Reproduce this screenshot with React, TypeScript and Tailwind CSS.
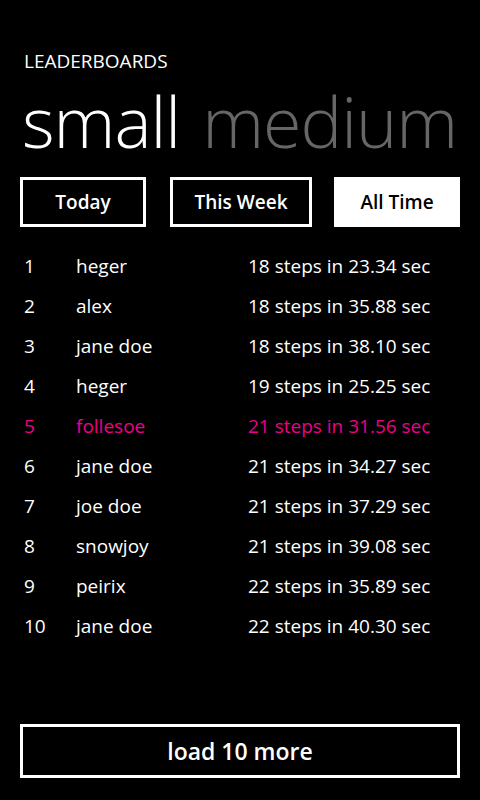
const rows = [
  { rank: 1, name: "heger", score: "18 steps in 23.34 sec" },
  { rank: 2, name: "alex", score: "18 steps in 35.88 sec" },
  { rank: 3, name: "jane doe", score: "18 steps in 38.10 sec" },
  { rank: 4, name: "heger", score: "19 steps in 25.25 sec" },
  { rank: 5, name: "follesoe", score: "21 steps in 31.56 sec", me: true },
  { rank: 6, name: "jane doe", score: "21 steps in 34.27 sec" },
  { rank: 7, name: "joe doe", score: "21 steps in 37.29 sec" },
  { rank: 8, name: "snowjoy", score: "21 steps in 39.08 sec" },
  { rank: 9, name: "peirix", score: "22 steps in 35.89 sec" },
  { rank: 10, name: "jane doe", score: "22 steps in 40.30 sec" },
];

export default function App() {
  return (
    <div className="flex min-h-[800px] w-[480px] flex-col bg-black font-['Open_Sans','Noto_Sans',sans-serif] text-white">
      <div className="px-6 pt-[48px] text-[19px] leading-[26px]">LEADERBOARDS</div>

      <div className="flex gap-[22px] whitespace-nowrap pl-[22px] text-[70px] font-light leading-[95px] tracking-[-1px]">
        <span>small</span>
        <span className="text-[#666666]">medium</span>
      </div>

      <div className="mt-[8px] flex px-5">
        <button className="h-[50px] w-[126px] border-[3px] border-white text-[19px] font-semibold">
          Today
        </button>
        <button className="ml-6 h-[50px] w-[142px] border-[3px] border-white text-[19px] font-semibold">
          This Week
        </button>
        <button className="ml-[22px] h-[50px] w-[126px] border-[3px] border-white bg-white text-[19px] font-semibold text-black">
          All Time
        </button>
      </div>

      <ul className="mt-[19px] px-6 text-[19px]">
        {rows.map((r) => (
          <li
            key={r.rank}
            className={
              "flex h-10 items-center " + (r.me ? "text-[#ec008c]" : "text-white")
            }
          >
            <span className="w-[52px]">{r.rank}</span>
            <span className="w-[172px]">{r.name}</span>
            <span>{r.score}</span>
          </li>
        ))}
      </ul>

      <div className="mt-auto px-5 pb-[22px]">
        <button className="h-[54px] w-full border-[3px] border-white text-[23px] font-semibold">
          load 10 more
        </button>
      </div>
    </div>
  );
}
